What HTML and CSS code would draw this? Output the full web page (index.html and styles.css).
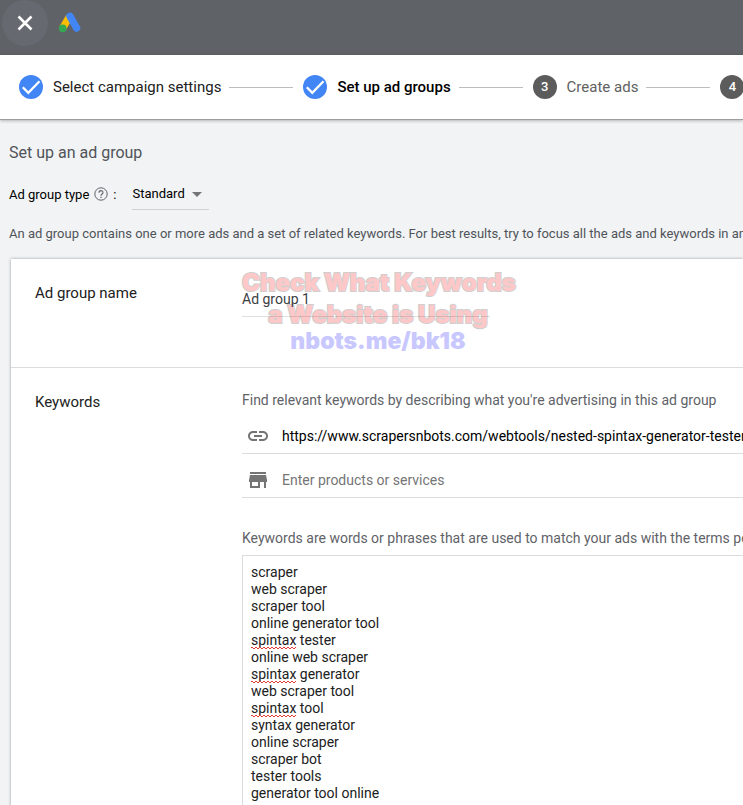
FILE: index.html
```html
<!DOCTYPE html>
<html lang="en">
<head>
    <meta charset="utf-8">
    <meta name="viewport" content="width=device-width, initial-scale=1">
    <title>Set up ad groups</title>
    <link rel="stylesheet" href="styles.css">
</head>
<body>
    <header class="topbar">
        <button type="button" class="close-btn" aria-label="Close">
            <svg width="16" height="16" viewBox="0 0 16 16"><path d="M1.5 1.5L14.5 14.5M14.5 1.5L1.5 14.5" stroke="#fff" stroke-width="2.6"/></svg>
        </button>
        <svg class="logo" width="24" height="22" viewBox="0 0 24 22">
            <path d="M11.5 4.5L4.5 16.5" stroke="#fbbc04" stroke-width="7.4"/>
            <path d="M12 4.3L18.6 16" stroke="#4285f4" stroke-width="7.4" stroke-linecap="round"/>
            <circle cx="4.7" cy="16.4" r="3.8" fill="#34a853"/>
        </svg>
    </header>

    <nav class="stepper">
        <div class="step done">
            <svg class="step-icon" width="24" height="24" viewBox="0 0 24 24"><circle cx="12" cy="12" r="12" fill="#4285f4"/><path d="M3.8 12.3L9.3 17.8L20.5 6.3" fill="none" stroke="#fff" stroke-width="2.3"/></svg>
            <span>Select campaign settings</span>
        </div>
        <div class="step-line"></div>
        <div class="step active">
            <svg class="step-icon" width="24" height="24" viewBox="0 0 24 24"><circle cx="12" cy="12" r="12" fill="#4285f4"/><path d="M3.8 12.3L9.3 17.8L20.5 6.3" fill="none" stroke="#fff" stroke-width="2.3"/></svg>
            <span>Set up ad groups</span>
        </div>
        <div class="step-line"></div>
        <div class="step">
            <span class="step-number">3</span>
            <span>Create ads</span>
        </div>
        <div class="step-line"></div>
        <div class="step">
            <span class="step-number">4</span>
        </div>
    </nav>

    <main class="content">
        <h1 class="title">Set up an ad group</h1>

        <div class="type-row">
            <label for="groupType">Ad group type</label>
            <svg class="help" width="14" height="14" viewBox="0 0 14 14" fill="none" stroke="#5f6368">
                <circle cx="7" cy="7" r="6.2"/>
                <path d="M5 5.7C5 3 9 3 9 5.6C9 7 7 7 7 8.7" stroke-width="1.1"/>
                <path d="M7 9.8V11" stroke-width="1.2"/>
            </svg>
            <span class="colon">:</span>
            <div class="select-wrap">
                <select id="groupType" class="type-select">
                    <option>Standard</option>
                </select>
            </div>
        </div>

        <p class="intro">An ad group contains one or more ads and a set of related keywords. For best results, try to focus all the ads and keywords in an</p>

        <section class="card">
            <div class="row name-row">
                <label class="row-label" for="groupName">Ad group name</label>
                <div class="row-body">
                    <div class="watermark">
                        <div class="outlined">Check What Keywords</div>
                        <div class="outlined">a Website is Using</div>
                        <div class="address">nbots.me/bk18</div>
                    </div>
                    <input id="groupName" class="name-input" type="text" value="Ad group 1">
                </div>
            </div>

            <div class="row keywords-row">
                <label class="row-label" for="keywords">Keywords</label>
                <div class="row-body">
                    <p class="hint">Find relevant keywords by describing what you're advertising in this ad group</p>
                    <div class="field">
                        <svg width="24" height="24" viewBox="0 0 24 24" fill="#757575"><path d="M3.9 12c0-1.71 1.39-3.1 3.1-3.1h4V7H7c-2.76 0-5 2.24-5 5s2.24 5 5 5h4v-1.9H7c-1.71 0-3.1-1.39-3.1-3.1zM8 13h8v-2H8v2zm9-6h-4v1.9h4c1.71 0 3.1 1.39 3.1 3.1s-1.39 3.1-3.1 3.1h-4V17h4c2.76 0 5-2.24 5-5s-2.24-5-5-5z"/></svg>
                        <input type="text" aria-label="Website" value="https://www.scrapersnbots.com/webtools/nested-spintax-generator-tester">
                    </div>
                    <div class="field">
                        <svg width="24" height="24" viewBox="0 0 24 24" fill="#757575"><path d="M20 4H4v2h16V4zm1 10v-2l-1-5H4l-1 5v2h1v6h10v-6h4v6h2v-6h1zm-9 4H6v-4h6v4z"/></svg>
                        <input type="text" aria-label="Products or services" placeholder="Enter products or services">
                    </div>
                    <p class="hint match-hint">Keywords are words or phrases that are used to match your ads with the terms people</p>
                    <div class="keywords-box">
                        <textarea id="keywords" class="keywords" rows="18" spellcheck="false">scraper
web scraper
scraper tool
online generator tool
spintax tester
online web scraper
spintax generator
web scraper tool
spintax tool
syntax generator
online scraper
scraper bot
tester tools
generator tool online</textarea>
                        <!-- spelling underlines, one grid row per line of text -->
                        <div class="spelling" aria-hidden="true">
                            <i class="line-5"></i>
                            <i class="line-7"></i>
                            <i class="line-9"></i>
                        </div>
                    </div>
                </div>
            </div>
        </section>
    </main>
</body>
</html>
```
FILE: styles.css
```css
* {
    box-sizing: border-box;
}

body {
    margin: 0;
    height: 100vh;
    overflow: hidden;
    font-family: Roboto, "Liberation Sans", sans-serif;
    font-size: 14px;
    background: #f1f3f4;
    color: #3c4043;
}

p, h1 {
    margin: 0;
}

input, select, textarea {
    font: inherit;
    border: none;
    outline: none;
    padding: 0;
    background: transparent;
}

/* top bar */
.topbar {
    display: flex;
    align-items: center;
    gap: 10px;
    height: 55px;
    padding: 0 2px 9px;
    background: #5f6368;
}

.close-btn {
    display: flex;
    align-items: center;
    justify-content: center;
    width: 46px;
    height: 46px;
    padding: 0;
    border: none;
    border-radius: 50%;
    background: #666970;
}

/* stepper */
.stepper {
    display: flex;
    align-items: center;
    height: 65px;
    padding: 0 19px;
    background: #fff;
    border-bottom: 1px solid #9b9da0;
    box-shadow: 0 1px 3px rgba(0,0,0,0.25);
    font-size: 15px;
    white-space: nowrap;
}

.step {
    display: flex;
    flex-shrink: 0;
    align-items: center;
    gap: 10px;
    color: #616161;
}

.step.done {
    color: #212121;
}

.step.active {
    color: #000;
    font-weight: 500;
}

.step-number {
    width: 24px;
    height: 24px;
    border-radius: 50%;
    background: #5c5c5c;
    color: #fff;
    font-size: 13px;
    font-weight: 500;
    line-height: 24px;
    text-align: center;
}

.step-line {
    flex: 0 0 64px;
    height: 1px;
    margin: 0 10px 0 8px;
    background: #bdbdbd;
}

/* content */
.content {
    padding: 23px 0 0 9px;
    white-space: nowrap;
}

.title {
    font-size: 16px;
    font-weight: 400;
    line-height: 20px;
    color: #50545a;
}

.type-row {
    display: flex;
    align-items: center;
    height: 32px;
    margin-top: 15px;
    font-size: 13px;
    color: #000;
}

.help {
    margin-left: 5px;
}

.colon {
    margin-left: 5px;
}

.select-wrap {
    position: relative;
    margin-left: 16px;
    border-bottom: 1px solid #cfd1d3;
}

.select-wrap::after {
    content: "";
    position: absolute;
    right: 7px;
    top: 14px;
    border: 5px solid transparent;
    border-top-color: #757575;
    border-bottom: none;
}

.type-select {
    appearance: none;
    display: block;
    width: 77px;
    height: 31px;
    color: #000;
}

.intro {
    margin-top: 14px;
    font-size: 13px;
    line-height: 20px;
    color: #50545a;
}

/* card */
.card {
    margin: 15px 0 0 2px;
    background: #fff;
    box-shadow: 0 0 3px rgba(0,0,0,0.35);
}

.row {
    display: flex;
    padding-left: 24px;
}

.row-label {
    flex: 0 0 207px;
    font-size: 15px;
    line-height: 20px;
    color: #212121;
}

.row-body {
    position: relative;
    flex: 1;
    min-width: 0;
}

.name-row {
    padding-top: 24px;
    padding-bottom: 50px;
    border-bottom: 1px solid #dadce0;
}

.name-input {
    position: relative;
    display: block;
    width: 248px;
    height: 34px;
    padding-bottom: 2px;
    border-bottom: 1px solid rgba(0,0,0,0.12);
    color: #3c4043;
}

.watermark {
    position: absolute;
    top: -16px;
    left: 0;
    width: 272px;
    font-family: "Arial Black", Inter, sans-serif;
    font-size: 24px;
    font-weight: 900;
    line-height: 32px;
    text-align: center;
    pointer-events: none;
}

.outlined {
    color: #ffc8c8;
    -webkit-text-stroke: 2px #cfcfcf;
    paint-order: stroke fill;
}

.address {
    font-size: 23px;
    line-height: 20px;
    color: #c8c8ff;
}

.keywords-row {
    padding-top: 24px;
}

.hint {
    margin-bottom: 6px;
    line-height: 16px;
    color: #5f6368;
}

.field {
    display: flex;
    align-items: center;
    gap: 12px;
    height: 40px;
    margin-top: 4px;
    padding: 4px 0 0 4px;
    border-bottom: 1px solid #dadce0;
}

.field svg {
    flex-shrink: 0;
}

.field input {
    flex: 1;
    min-width: 0;
    color: #000;
}

.field input::placeholder {
    color: #757575;
}

.match-hint {
    margin: 32px 0 9px;
}

.keywords-box {
    position: relative;
}

.keywords {
    display: block;
    width: 100%;
    padding: 8px;
    border: 1px solid #dadce0;
    border-right: none;
    line-height: 17px;
    color: #212121;
    resize: none;
}

.spelling {
    position: absolute;
    top: 9px;
    left: 9px;
    display: grid;
    grid-auto-rows: 17px;
    align-items: end;
    font-size: 14px;
}

.spelling i {
    width: 45px;
    height: 2px;
    background:
        repeating-linear-gradient(90deg, #e53935 0 2px, transparent 2px 4px) 0 0 / 100% 1px no-repeat,
        repeating-linear-gradient(90deg, transparent 0 2px, #e53935 2px 4px) 0 1px / 100% 1px no-repeat;
}

.line-5 {
    grid-row: 5;
}

.line-7 {
    grid-row: 7;
}

.line-9 {
    grid-row: 9;
}
```
